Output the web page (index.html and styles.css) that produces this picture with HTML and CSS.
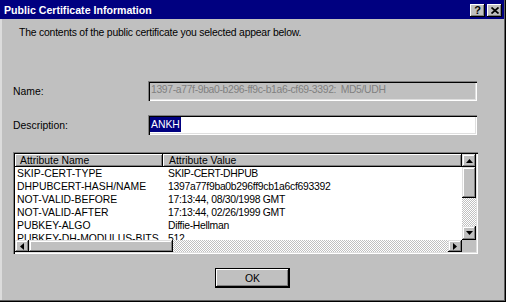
FILE: index.html
```html
<!DOCTYPE html>
<html>
<head lang="en">
    <meta charset="UTF-8">
    <title>Public Certificate Information</title>
    <link rel="stylesheet" href="styles.css">
</head>
<body>

<div class="window">
    <div class="titlebar">
        <span class="title">Public Certificate Information</span>
        <div class="tb-buttons">
            <button class="tb-btn help">?</button>
            <button class="tb-btn close">
                <svg width="8" height="7" viewBox="0 0 8 7"><path d="M0.5 0.5L7.5 6.5M7.5 0.5L0.5 6.5" stroke="#000" stroke-width="1.7"/></svg>
            </button>
        </div>
    </div>

    <div class="content">
        <p class="intro">The contents of the public certificate you selected appear below.</p>

        <div class="field-row name-row">
            <label>Name:</label>
            <div class="field disabled">1397-a77f-9ba0-b296-ff9c-b1a6-cf69-3392: MD5/UDH</div>
        </div>

        <div class="field-row desc-row">
            <label>Description:</label>
            <div class="field"><span class="sel">ANKH</span></div>
        </div>

        <div class="listview">
            <div class="lv-body">
                <div class="lv-header">
                    <div class="hcell">Attribute Name</div>
                    <div class="hcell">Attribute Value</div>
                </div>
                <div class="lv-row"><span>SKIP-CERT-TYPE</span><span>SKIP-CERT-DHPUB</span></div>
                <div class="lv-row"><span>DHPUBCERT-HASH/NAME</span><span>1397a77f9ba0b296ff9cb1a6cf693392</span></div>
                <div class="lv-row"><span>NOT-VALID-BEFORE</span><span>17:13:44, 08/30/1998 GMT</span></div>
                <div class="lv-row"><span>NOT-VALID-AFTER</span><span>17:13:44, 02/26/1999 GMT</span></div>
                <div class="lv-row"><span>PUBKEY-ALGO</span><span>Diffie-Hellman</span></div>
                <div class="lv-row"><span>PUBKEY-DH-MODULUS-BITS</span><span>512</span></div>
            </div>

            <div class="vscroll">
                <div class="sb-btn up"><svg width="7" height="4"><polygon points="3.5,0 7,4 0,4"/></svg></div>
                <div class="sb-thumb vthumb"></div>
                <div class="sb-track"></div>
                <div class="sb-btn down"><svg width="7" height="4"><polygon points="0,0 7,0 3.5,4"/></svg></div>
            </div>

            <div class="hscroll">
                <div class="sb-btn left"><svg width="4" height="7"><polygon points="4,0 4,7 0,3.5"/></svg></div>
                <div class="sb-thumb hthumb"></div>
                <div class="sb-track"></div>
                <div class="sb-btn right"><svg width="4" height="7"><polygon points="0,0 4,3.5 0,7"/></svg></div>
            </div>

            <div class="corner"></div>
        </div>

        <div class="actions">
            <button class="ok">OK</button>
        </div>
    </div>
</div>

</body>
</html>
```

FILE: styles.css
```css
* {
    padding: 0;
    margin: 0;
    box-sizing: border-box;
}
body {
    font-family: "Liberation Sans", Arial, sans-serif;
    font-size: 10.4px;
    color: #000;
    background: #c0c0c0;
}
button {
    border: 0;
    background: #c0c0c0;
    font: inherit;
    color: #000;
}
.window {
    width: 506px;
    height: 302px;
    display: flex;
    flex-direction: column;
    background: #c0c0c0;
    padding: 0 2px 2px 0;
    box-shadow: inset -1px -1px #000, inset -2px -2px #606060;
}

/* title bar */
.titlebar {
    height: 19px;
    background: #000080;
    color: #fff;
    display: flex;
    align-items: center;
    justify-content: space-between;
    padding-left: 4px;
}
.title {
    font-weight: 700;
    font-size: 10.6px;
}
.tb-buttons {
    display: flex;
    gap: 2px;
    margin-right: 2px;
    margin-top: 2px;
}
.tb-btn {
    width: 15px;
    height: 13px;
    display: flex;
    align-items: center;
    justify-content: center;
    font-weight: 700;
    font-size: 11px;
    line-height: 13px;
    box-shadow: inset -1px -1px #000, inset 1px 1px #fff, inset -2px -2px #808080;
}

/* body */
.content {
    flex: 1;
    border-left: 2px solid #dcdcdc;
    padding: 7px 0 0 11px;
}
.intro {
    margin-left: 6px;
    line-height: 14px;
    letter-spacing: -0.2px;
}
.field-row {
    display: flex;
    align-items: center;
}
.field-row label {
    width: 135px;
}
.name-row {
    margin-top: 41px;
}
.desc-row {
    margin-top: 14px;
}
.field {
    width: 329px;
    height: 20px;
    background: #fff;
    padding: 2px 0 0 2px;
    line-height: 16px;
    box-shadow: inset 1px 1px #808080, inset 2px 2px #000, inset -1px -1px #fff, inset -2px -2px #dfdfdf;
}
.field.disabled {
    background: #c0c0c0;
    color: #808080;
    padding: 1px 0 0 3px;
    letter-spacing: -0.35px;
    word-spacing: 2px;
}
.sel {
    display: inline-block;
    background: #000080;
    color: #fff;
    padding: 0 1px;
    line-height: 15px;
}

/* list view */
.listview {
    margin-top: 17px;
    width: 465px;
    height: 102px;
    padding: 2px;
    background: #fff;
    display: grid;
    grid-template-columns: 1fr 14px;
    grid-template-rows: 1fr 12px;
    box-shadow: inset 1px 1px #808080, inset 2px 2px #000, inset -1px -1px #fff, inset -2px -2px #dfdfdf;
}
.lv-body {
    overflow: hidden;
    background: #fff;
}
.lv-header,
.lv-row {
    display: grid;
    grid-template-columns: 148px 1fr;
    line-height: 13px;
}
.hcell {
    height: 13px;
    background: #c0c0c0;
    padding-left: 5px;
    box-shadow: inset -1px -1px #000, inset 1px 1px #fff, inset -2px -2px #808080;
}
.hcell + .hcell {
    padding-left: 6px;
}
.lv-row span {
    padding-left: 2px;
    white-space: nowrap;
}
.lv-row span + span {
    padding-left: 5px;
    letter-spacing: -0.3px;
}

/* scroll bars */
.vscroll {
    display: flex;
    flex-direction: column;
}
.hscroll {
    display: flex;
}
.sb-btn {
    background: #c0c0c0;
    display: flex;
    align-items: center;
    justify-content: center;
    box-shadow: inset -1px -1px #000, inset 1px 1px #dfdfdf, inset -2px -2px #808080, inset 2px 2px #fff;
}
.sb-thumb {
    background: #c0c0c0;
    box-shadow: inset -1px -1px #000, inset 1px 1px #dfdfdf, inset -2px -2px #808080, inset 2px 2px #fff;
}
.sb-track {
    flex: 1;
    background: repeating-conic-gradient(#c0c0c0 0 25%, #fff 0 50%) 0 0 / 2px 2px;
}
.up {
    height: 13px;
}
.down {
    height: 14px;
}
.vthumb {
    height: 31px;
}
.left,
.right {
    width: 14px;
}
.hthumb {
    width: 144px;
}
.corner {
    background: #c0c0c0;
}

/* buttons */
.actions {
    margin-top: 14px;
    padding-left: 202px;
}
.ok {
    width: 75px;
    height: 20px;
    border: 1px solid #000;
    box-shadow: inset -1px -1px #000, inset 1px 1px #fff, inset -2px -2px #808080;
}
```
